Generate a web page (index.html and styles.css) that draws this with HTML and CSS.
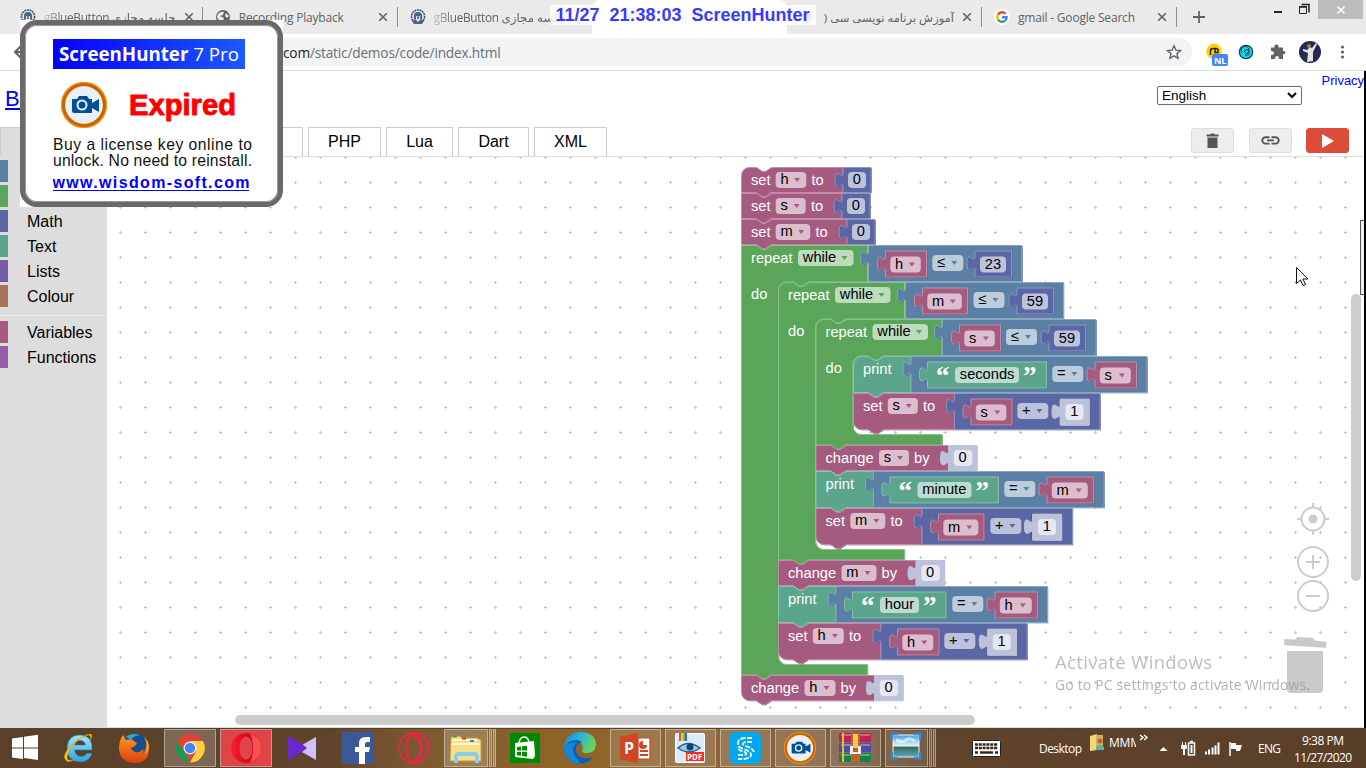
FILE: index.html
```html
<!DOCTYPE html>
<html lang="en">
<head>
<meta charset="utf-8">
<title>Blockly Demo: Code</title>
<link rel="stylesheet" href="styles.css">
</head>
<body>
<svg class="defs" width="0" height="0">
  <symbol id="crest" viewBox="0 0 16 16"><circle cx="8" cy="7.5" r="6.6" fill="#dde2ea" stroke="#3b4d6d" stroke-width="1.5" stroke-dasharray="2 .7"/><path d="M4 7a4 4 0 0 1 8 0v3H4zM2 12l3-2 3 3 3-3 3 2-2 3H4z" fill="#52627f"/><path d="M6 7h1.3v3H6zm2.8 0h1.3v3H8.800z" fill="#dde2ea"/></symbol>
  <symbol id="close" viewBox="0 0 10 10"><path d="M1.200 1.200l7.600 7.600M8.800 1.200l-7.600 7.600" stroke="#5f6368" stroke-width="1.600"/></symbol>
  <symbol id="camera" viewBox="0 0 46 46"><circle cx="23" cy="23" r="21" fill="#e9f0f9" stroke="#f7941d" stroke-width="4.500"/><circle cx="23" cy="23" r="20.500" fill="none" stroke="#c86400" stroke-width="2.800"/><path d="M11 17h5l2-3h8l2 3h3v4l7-4v13l-7-4v5H13q-2 0-2-2z" fill="#034f96"/><circle cx="21" cy="23" r="4.500" fill="#034f96" stroke="#e9f0f9" stroke-width="2"/></symbol>
</svg>

<div class="screen">
  <div class="tabstrip">
    <div class="tab"><svg class="fav"><use href="#crest"/></svg><span class="t fade" dir="ltr">gBlueButton جلسه مجازی</span><svg class="x"><use href="#close"/></svg></div>
    <div class="tab"><svg class="fav" viewBox="0 0 16 16"><circle cx="8" cy="8" r="7" fill="#5f6368"/><path d="M3 5q3-3 6-2l-1 3-3 1 4 2-1 3Q3 12 2 8zM11 4l3 3-2 2-2-2z" fill="#e9e9e9"/></svg><span class="t">Recording Playback</span><svg class="x"><use href="#close"/></svg></div>
    <div class="tab"><svg class="fav"><use href="#crest"/></svg><span class="t fade" dir="ltr">gBlueButton جلسه مجازی</span></div>
    <div class="tab active"><svg class="fav pale" viewBox="0 0 16 16"><path d="M1 2h7v4h7v8H5v-4H1z" fill="#b9cfe4"/></svg><span class="t pale">Blockly Demo: Code</span></div>
    <div class="tab fa"><svg class="fav" viewBox="0 0 16 16"><circle cx="8" cy="7" r="5" fill="#8fa4b8"/><path d="M5 11h6l-3 4z" fill="#8fa4b8"/></svg><span class="t" dir="rtl">آموزش برنامه نویسی سی (</span><svg class="x"><use href="#close"/></svg></div>
    <div class="tab"><svg class="fav" viewBox="0 0 16 16"><circle cx="8" cy="8" r="8" fill="#fff"/><g fill="none" stroke-width="2.400"><path d="M4 5.500A4.700 4.700 0 0 1 11.500 4.800" stroke="#ea4335"/><path d="M4 5.500a4.700 4.700 0 0 0 0 5" stroke="#fbbc05"/><path d="M4 10.500a4.700 4.700 0 0 0 7.300 1" stroke="#34a853"/><path d="M11.300 11.500A4.700 4.700 0 0 0 12.600 8.200H8" stroke="#4285f4"/></g></svg><span class="t">gmail - Google Search</span><svg class="x"><use href="#close"/></svg></div>
    <svg class="plus" viewBox="0 0 12 12"><path d="M6 0v12M0 6h12" stroke="#5f6368" stroke-width="1.800"/></svg>
    <div class="winctl">
      <svg width="52" height="20" viewBox="0 0 52 20"><path d="M8 12h8" stroke="#222" stroke-width="2"/><path d="M33.500 6.500h7v7h-7z" fill="none" stroke="#222"/><path d="M33 7h8M35.500 4.500h7.500v8" stroke="#222" stroke-width="1.500" fill="none"/></svg>
      <span class="winclose"><svg width="10" height="10" viewBox="0 0 10 10"><path d="M1.500 1.500l7 7M8.500 1.500l-7 7" stroke="#fff" stroke-width="1.700"/></svg></span>
    </div>
  </div>

  <div class="toolbar">
    <svg class="back" width="16" height="16" viewBox="0 0 16 16"><path d="M8 1L1 8l7 7M1 8h14" stroke="#5f6368" stroke-width="2" fill="none"/></svg>
    <div class="omnibox"><span class="url"><b>com</b>/static/demos/code/index.html</span>
      <svg width="16" height="16" viewBox="0 0 16 16"><path d="M8 1.800l1.900 4.400 4.700.4-3.600 3.100 1.100 4.700L8 11.900l-4.100 2.500L5 9.700 1.400 6.600l4.700-.4z" fill="none" stroke="#5f6368" stroke-width="1.400"/></svg>
    </div>
    <svg class="ext" width="160" height="28" viewBox="1200 38 160 28">
      <circle cx="1214" cy="51.500" r="7.700" fill="#fdd100"/><path d="M1210.500 55v-4q0-2.500 2.500-2.500h3q2 0 2 2v2h-3v-4" fill="none" stroke="#222" stroke-width="1.500"/><rect x="1212" y="54" width="16" height="12" rx="2" fill="#4285f4"/><text x="1214" y="63.500" class="nl">NL</text>
      <circle cx="1246" cy="52" r="6.700" fill="#16d5ee" stroke="#0d4553" stroke-width="1.200"/><path d="M1242 53a4 4 0 1 1 7-2l-2 3-3-3q3-3 5 0 2 5-4 4" fill="none" stroke="#0d4553"/>
      <path d="M1271 47.500h3.500q-.5-3 2-3t2 3h4.500v3.500q2.500-.5 2.500 1.500t-2.500 1.500v5h-4q0-3-2-3t-2 3h-4v-4q3 0 3-2t-3-2z" fill="#5f6368"/>
      <circle cx="1310" cy="52" r="11" fill="#222b50"/><path d="M1303 49l4 1 3-3 2 1 4-5 1 1-4 8v9l-6 1 1-9-5-2z" fill="#e9e4e1"/><circle cx="1309" cy="46" r="2" fill="#a87963"/>
      <circle cx="1342.500" cy="47" r="1.600" fill="#5f6368"/><circle cx="1342.500" cy="52" r="1.600" fill="#5f6368"/><circle cx="1342.500" cy="57" r="1.600" fill="#5f6368"/>
    </svg>
  </div>

  <div class="page">
    <header class="head">
      <a class="brand">Blockly</a>
      <span class="select">English<svg width="10" height="7" viewBox="0 0 10 7"><path d="M1 1l4 4 4-4" fill="none" stroke="#111" stroke-width="2.200"/></svg></span>
      <a class="privacy">Privacy</a>
    </header>
    <nav class="codetabs">
      <span class="ct on" style="width:80px"></span><span class="ct" style="width:125px"></span><span class="ct" style="width:88px"></span><span class="ct" style="width:73px">PHP</span><span class="ct" style="width:67px">Lua</span><span class="ct" style="width:71px">Dart</span><span class="ct" style="width:73px">XML</span>
      <div class="buttons">
        <span class="btn"><svg width="13" height="16" viewBox="0 0 13 16"><path d="M.5 1.500h3.500l1-1h3l1 1h3.500v2H.5zM1.500 4.500h10V15h-10z" fill="#555"/></svg></span>
        <span class="btn"><svg width="19" height="9" viewBox="0 0 19 9"><path d="M8.500 1.200H4.500a3.200 3.200 0 0 0 0 6.400h4M10.500 1.200h4a3.200 3.200 0 0 1 0 6.400h-4M6 4.400h7" stroke="#555" stroke-width="1.900" fill="none"/></svg></span>
        <span class="btn run"><svg width="12" height="14" viewBox="0 0 12 14"><path d="M0 0l12 7-12 7z" fill="#fff"/></svg></span>
      </div>
    </nav>
    <div class="editor">
      <aside class="toolbox">
        <div class="cat"><i style="background:#5b80a5"></i></div>
        <div class="cat"><i style="background:#5ba55b"></i></div>
        <div class="cat"><i style="background:#5b67a5"></i>Math</div>
        <div class="cat"><i style="background:#5ba58c"></i>Text</div>
        <div class="cat"><i style="background:#745ba5"></i>Lists</div>
        <div class="cat"><i style="background:#a5745b"></i>Colour</div>
        <hr>
        <div class="cat"><i style="background:#a55b80"></i>Variables</div>
        <div class="cat"><i style="background:#995ba5"></i>Functions</div>
      </aside>
      <svg class="workspace" width="1257" height="570" viewBox="107 157 1257 570">
        <defs><pattern id="grid" x="108" y="195" width="25" height="25" patternUnits="userSpaceOnUse"><path d="M11 12.500h3M12.500 11v3" stroke="#c6c6c6" stroke-width="1"/></pattern></defs>
        <rect x="107" y="157" width="1257" height="570" fill="url(#grid)"/>
        <g id="blocks"></g>
        <g fill="none" stroke="#ccc" stroke-width="2">
          <circle cx="1313" cy="519" r="11.500"/><circle cx="1313" cy="519" r="4.500" fill="#ccc" stroke="none"/><path d="M1313 503v4m0 24v4M1297 519h4m24 0h4"/>
          <circle cx="1313" cy="562" r="15"/><path d="M1306 562h14m-7-7v14"/>
          <circle cx="1313" cy="596" r="15"/><path d="M1306 596h14"/>
        </g>
        <path d="M1284.300 639l11 .6 2-2.600 15 .8 3 3 11.200 1-.5 6-42-2.500z" fill="#c9c9c9"/><path d="M1287 651h36v38q0 4-4 4h-28q-4 0-4-4z" fill="#c9c9c9"/>
        <rect x="235" y="715" width="740" height="10" rx="5" fill="#ccc"/>
        <rect x="1351" y="294" width="10" height="287" rx="5" fill="#ccc"/>
        <rect x="1360.500" y="220.500" width="8" height="74" fill="#e8f1fb" stroke="#555"/>
        <path d="M1296.500 267.500v16l4-3.500 2.500 5.500 2.500-1-2.500-5.500h5z" fill="#fff" stroke="#111"/>
        <text x="1055" y="669" class="wm1" textLength="157">Activate Windows</text>
        <text x="1055" y="690" class="wm2" textLength="255">Go to PC settings to activate Windows.</text>
      </svg>
    </div>
  </div>

  <footer class="taskbar">
    <svg class="apps" width="940" height="40" viewBox="0 728 940 40">
      <defs>
        <linearGradient id="ie" x2="0" y2="1"><stop stop-color="#a5e6ff"/><stop offset="1" stop-color="#2ca3df"/></linearGradient>
        <linearGradient id="op" x2="1"><stop stop-color="#ff1b2d"/><stop offset="1" stop-color="#a70014"/></linearGradient>
        <linearGradient id="ed" x2="1" y2=".4"><stop stop-color="#1b7fd4"/><stop offset=".5" stop-color="#2bb3dc"/><stop offset="1" stop-color="#6ad35b"/></linearGradient>
        <linearGradient id="ff" x2="0" y2="1"><stop stop-color="#ff9a1a"/><stop offset="1" stop-color="#dc3f12"/></linearGradient>
        <linearGradient id="sky" x2="0" y2="1"><stop stop-color="#3f9ee8"/><stop offset=".5" stop-color="#e5f4fa"/><stop offset=".55" stop-color="#386b55"/><stop offset="1" stop-color="#5fa5c7"/></linearGradient>
      </defs>
      <g fill="#fff" fill-opacity=".2" stroke="#fff" stroke-opacity=".45">
        <rect x="164.500" y="729.500" width="51" height="37"/><rect x="220.500" y="729.500" width="51" height="37" fill="#ff4650" fill-opacity=".8"/>
        <rect x="444.500" y="729.500" width="43" height="37"/><path d="M489.500 729.500h2v37h-2zM493.500 729.500h2v37h-2z"/>
        <g fill-opacity=".13"><rect x="610.500" y="729.500" width="50" height="37"/><rect x="665.500" y="729.500" width="50" height="37"/><rect x="720.500" y="729.500" width="50" height="37"/><rect x="775.500" y="729.500" width="50" height="37"/><rect x="830.500" y="729.500" width="50" height="37"/>
        <rect x="885.500" y="729.500" width="42" height="37"/><path d="M929.500 729.500h2v37h-2zM933.500 729.500h2v37h-2z"/></g>
      </g>
      <path d="M12 738.500l11-1.600v10.600H12zm12-1.700l14-2v12.700H24zM12 748.500h11v10.600l-11-1.600zm12 0h14V760l-14-2z" fill="#fff"/>
      <path fill-rule="evenodd" d="M92 750H74.500q1 6.500 6.500 6.500 4 0 5.500-3H92q-3 8.500-12 8.500-13-1-13-14 1-13 13-13 13 1 12 15zm-17.500-5h11q-1-4.500-5.500-4.500t-5.500 4.500z" fill="url(#ie)" stroke="#1a83bd" stroke-width=".5"/><path d="M66 760q-5-4 6-15T91 734q2 2-1 6 2-5-2-5-9 2-17 13-6 9-3 12 3 1 7-1-8 5-9 1z" fill="#ffc915" stroke="#ce940b" stroke-width=".5"/>
      <circle cx="135" cy="747" r="13.500" fill="#174f8e"/><path d="M126 737q5-5 14-2-8 1-8 5z" fill="#3b9ed2"/><path d="M119 749q0-9 4-14l3 5q5-2 8 1l3 2-2 3-4 2q2 5 8 4 3-1 4-3 2 3-2 5 4-1 5-8 1-6-3-10 6 4 6 13 0 14-15 14-14-1-15-14z" fill="url(#ff)"/><path d="M145 739q5 7 0 15 5-4 3-12z" fill="#ffc42a"/>
      <circle cx="190" cy="748" r="14.500" fill="#db4437"/><path d="M177 741.500l7 10 6 10.500A14.500 14.500 0 0 1 177 741.500z" fill="#0f9d58"/><path d="M190 741h13a14.500 14.500 0 0 1-13 21.500l6-11z" fill="#ffcd40"/><circle cx="190" cy="748" r="6.500" fill="#f1f1f1"/><circle cx="190" cy="748" r="5.200" fill="#4285f4"/>
      <path fill-rule="evenodd" d="M246 733a15 15 0 1 0 .1 0zm0 3.500c4 0 6.500 5 6.500 11.500s-2.500 11.500-6.500 11.500-6.500-5-6.500-11.500 2.500-11.500 6.500-11.500z" fill="url(#op)"/>
      <path d="M250 734q11 3 11 14t-11 14q3-5 3-14t-3-14z" fill="#ff504f"/>
      <path d="M288 737v22l1 1 14-9v-6l-14-9z" fill="#6928cf"/><path d="M316 737v23l-14-8v-7z" fill="#d1c0fb"/><path d="M302 744l5 4-5 4z" fill="#6928cf"/>
      <rect x="342" y="732" width="32" height="32" rx="1" fill="#3b5998"/><path d="M359 764v-12h-4v-5h4v-4q0-6 7-6h4v5h-3q-2 0-2 2v3h5l-1 5h-4v12z" fill="#fff"/>
      <g fill="none" stroke="#fa1e4e" stroke-width="1.500"><circle cx="414" cy="748" r="15"/><ellipse cx="414" cy="748" rx="8" ry="14"/><path d="M409 734q13 5 12 15-1 8-7 12"/></g>
      <path d="M451 737l8-1 3 2h15l4 2v21h-31z" fill="#f4df8c" stroke="#c89c42"/><path d="M453 740h24M452 744h27" stroke="#fff8c9" stroke-width="2"/><path d="M453 736.500h4" stroke="#2caa37" stroke-width="2"/><path d="M462 738.500h4" stroke="#d8411d" stroke-width="2"/><path d="M470 741h4" stroke="#238bdb" stroke-width="2"/><path d="M456 763v-6q0-3 3-3h15q3 0 3 3v6" fill="none" stroke="#8accea" stroke-width="4"/>
      <rect x="510" y="733" width="30" height="30" fill="#008a00"/><path d="M515 743l19-2 1 15-2 3-18-2z" fill="#fff"/><path d="M519 743q1-6 5-6t5 5" fill="none" stroke="#fff" stroke-width="1.500"/><path d="M517 747l4-.5v4h-4zm5-.7l5-.5v4.700h-5zm-5 5.500h4v4l-4-.5zm5 0h5v5l-5-.8z" fill="#008a00"/>
      <path d="M564 748q1-16 17-16 15 1 15 13-1 8-9 8-5 0-5-2 3-7-5-9-8-1-13 6z" fill="url(#ed)"/><path d="M564 748q4-8 12-8 4 0 6 3-7 0-6 8 2 10 17 6-5 7-14 7-14-2-15-16z" fill="#0d61b4"/><path d="M564 748q5-7 13-5-7 4-2 13 3 5 6 8-16-1-17-16z" fill="#1686d8"/>
      <path d="M620 737l18-4v30l-18-4z" fill="#d04526"/><path d="M638 738h12v21h-12z" fill="#fff" stroke="#d04526" stroke-width="1.200"/><path d="M640 751h8m-8 4h8" stroke="#d04526" stroke-width="1.800"/><circle cx="643" cy="745" r="4" fill="#d04526"/><path d="M643 745v-4.500a4.500 4.500 0 0 1 4.500 4.500z" fill="#fff"/><text x="624" y="754" class="ppt">P</text>
      <rect x="675.500" y="733.500" width="29" height="29" rx="1" fill="#dcebf9" stroke="#fff"/><path d="M679 733h2v8h-2z" fill="#f44"/><path d="M681 733h2v8h-2z" fill="#fd3"/><path d="M683 733h2v8h-2z" fill="#4c6"/><path d="M685 733h2v8h-2z" fill="#55e"/><path d="M678 748q10-9 22 0-11 8-22 0z" fill="#9dc9ec" stroke="#1d5c8b" stroke-width="1.500"/><circle cx="690" cy="747" r="3.500" fill="#12466f"/><rect x="686" y="752" width="18" height="9" fill="#ee3124"/><text x="687" y="759.500" class="pdf">PDF</text>
      <rect x="729" y="732" width="32" height="32" rx="6" fill="#00a9ee"/><path d="M752 738h-8q-6 1-6 5t5 6q8 2 8 6 0 3-7 4h-6M752 742h-7q-4 2 0 4 7 1 9 6M738 755h6q4-1 1-3-7-1-7-5" fill="none" stroke="#fff" stroke-width="1.800" stroke-dasharray="5 1.500"/>
      <use href="#camera" x="784" y="732" width="32" height="32"/>
      <rect x="839" y="733" width="32" height="9" rx="1" fill="#bd2350"/><rect x="839" y="743" width="32" height="9" rx="1" fill="#504ca5"/><rect x="839" y="753" width="32" height="9" rx="1" fill="#18814a"/><path d="M841 735h29M841 745h29M841 755h29" stroke="#fff" stroke-opacity=".3" stroke-width="2"/><path d="M843 733v29" stroke="#e9b93b" stroke-width="2"/><path d="M851 733h9v29h-9z" fill="#b9652a"/><path d="M853 734h5v14h-5z" fill="#ffc84b"/><path d="M850 746h3v6h5v-6h3v8h-11z" fill="#eee"/>
      <rect x="893" y="735" width="26" height="22" fill="url(#sky)" stroke="#e8f3fa"/><path d="M896 740q7 3 10 0t9 1" stroke="#fff" stroke-width="3" opacity=".6" fill="none"/><path d="M892 740v-6h6M914 734h6v6M920 752v6h-6M898 758h-6v-6" stroke="#3d88c7" stroke-width="2.500" fill="none"/>
    </svg>
    <svg class="tray" width="426" height="40" viewBox="940 728 426 40">
      <rect x="972.500" y="740.500" width="28" height="16" rx="1" fill="#fff" stroke="#222"/><path d="M975 744.500h23M975 748h23M975 752.500h3m17 0h3" stroke="#332517" stroke-width="2.400" stroke-dasharray="3 .8"/><path d="M980 752.500h13" stroke="#332517" stroke-width="2.400"/>
      <text x="1039" y="752.500" class="tk" textLength="43">Desktop</text>
      <path d="M1090 736l7-2v16l-7 1z" fill="#f3d77b"/><path d="M1096 735h7v15h-7z" fill="#d9ae4c"/><circle cx="1100" cy="741" r="2.500" fill="#a66c43"/><path d="M1096 750v-3q4-5 8 0v3z" fill="#54b6a3"/>
      <svg x="1108" y="730" width="28" height="26" viewBox="1108 730 28 26"><text x="1109" y="747" class="tk" textLength="32">MMM</text></svg>
      <path d="M1140 735l3 2.500-3 2.500m4-5l3 2.500-3 2.500" fill="none" stroke="#fff" stroke-width="1.400"/>
      <path d="M1159.500 751l4-4 4 4z" fill="#fff"/>
      <path d="M1182.500 742v3m3-3v3" stroke="#fff"/><path d="M1181 745h6v4h-2v6h-2v-6h-2z" fill="#fff"/><rect x="1188.500" y="743" width="6" height="12" fill="none" stroke="#fff" stroke-width="1.500"/><path d="M1190 741.500h3" stroke="#fff" stroke-width="1.500"/><path d="M1190.500 745h2v8h-2z" fill="#fff"/>
      <path d="M1206 754.500v-3m3 3v-5m3.500 5v-7m3 7v-9m3 9v-12" stroke="#fff" stroke-width="2"/>
      <path d="M1230 742v14" stroke="#fff" stroke-width="1.500"/><path d="M1231 743h5v2h6l-2 6h-4v-2h-5z" fill="#fff"/>
      <text x="1258" y="753" class="tk" textLength="23">ENG</text>
      <text x="1302" y="745" class="tk" textLength="42">9:38 PM</text><text x="1294" y="762" class="tk" textLength="58">11/27/2020</text>
    </svg>
  </footer>

  <div class="stamp"><svg width="266" height="20"><text x="5.500" y="16" textLength="254" lengthAdjust="spacingAndGlyphs" xml:space="preserve">11/27  21:38:03  ScreenHunter</text></svg></div>
  <div class="popup">
    <div class="card">
      <div class="banner"><svg width="192" height="30"><text x="6" y="22" textLength="180" lengthAdjust="spacingAndGlyphs"><tspan font-weight="700">ScreenHunter</tspan> 7 Pro</text></svg></div>
      <div class="exp"><svg width="46" height="46"><use href="#camera"/></svg><svg width="120" height="46"><text x="6" y="33" textLength="107" lengthAdjust="spacingAndGlyphs" class="expt">Expired</text></svg></div>
      <svg width="210" height="60"><text x="0" y="14" textLength="199" class="pt">Buy a license key online to</text><text x="0" y="30" textLength="199" class="pt">unlock. No need to reinstall.</text><text x="-.5" y="52" textLength="197" class="pl">www.wisdom-soft.com</text><path d="M-1 54.500h197" stroke="#00f"/></svg>
    </div>
  </div>
</div>
<script src="blocks.js"></script>
</body>
</html>
```

FILE: styles.css
```css
* { box-sizing: border-box; }
body { margin: 0; background: #fff; font-family: "Liberation Sans", sans-serif; }
svg { display: block; flex: none; }
.defs { position: absolute; }
.screen { position: relative; width: 1366px; height: 768px; overflow: hidden; display: flex; flex-direction: column; }

.tabstrip { height: 34px; flex: none; background: #eaeaea; display: flex; padding-left: 8px; align-items: center; font: 12px "Open Sans", "DejaVu Sans", sans-serif; color: #5f6368; }
.tab { width: 194.8px; flex: none; height: 34px; padding: 0 10px 0 12px; display: flex; align-items: center; gap: 8px; position: relative; }
.tab::after { content: ""; position: absolute; right: 0; top: 7px; width: 1px; height: 20px; background: #8a8d91; }
.tab:nth-child(3)::after, .tab.active::after { display: none; }
.tab.active { background: #fff; border-radius: 8px 8px 0 0; }
.fav { width: 16px; height: 16px; }
.t { flex: 1; white-space: nowrap; letter-spacing: -.2px; }
.t.fade { font-size: 11.800px; letter-spacing: -.3px; -webkit-mask-image: linear-gradient(90deg, #0004, #000 20px); }
.pale { opacity: .35; }
.fa .t { font-size: 11.500px; letter-spacing: 0; }
.x { width: 10px; height: 10px; }
.plus { width: 12px; height: 12px; margin-left: 16px; }
.winctl { margin-left: auto; display: flex; align-items: flex-start; height: 34px; padding-right: 3px; }
.winclose { width: 45px; height: 19px; background: #bcbcbc; display: flex; align-items: center; justify-content: center; }

.toolbar { height: 37px; flex: none; border-bottom: 1px solid #d9dbde; display: flex; align-items: center; padding-left: 14px; }
.omnibox { width: 1082px; height: 28px; margin-left: 80px; background: #f1f3f4; border-radius: 14px; display: flex; align-items: center; justify-content: space-between; padding: 0 10px 0 173px; }
.url { font: 13.700px "Open Sans", sans-serif; color: #6b6f73; letter-spacing: -.2px; white-space: nowrap; }
.url b { font-weight: 400; color: #222; }
.ext { margin-left: 8px; }
.nl { font: 700 9px "Open Sans", sans-serif; fill: #fff; }

.page { height: 657px; flex: none; width: 1364px; display: flex; flex-direction: column; border-bottom: 1px solid #ddd; box-shadow: 2px 0 0 #000; }
.head { height: 56px; flex: none; display: flex; align-items: flex-start; }
.brand { margin: 15px 0 0 5px; color: #00f; text-decoration: underline; font-size: 22px; }
.select { margin: 15px 0 0 auto; width: 145px; height: 19px; border: 1px solid #6b6b6b; border-radius: 2px; padding: 0 4px; display: flex; align-items: center; justify-content: space-between; font-size: 13.5px; color: #000; }
.privacy { margin: 2px 0 0 19.5px; width: 42.5px; font-size: 13px; color: #00f; white-space: nowrap; }
.codetabs { height: 30px; flex: none; display: flex; gap: 5px; border-bottom: 1px solid #ddd; }
.ct { border: 1px solid #ccc; border-bottom: 0; height: 29px; flex: none; display: flex; align-items: center; justify-content: center; font-size: 16px; }
.ct.on { background: #ddd; }
.buttons { margin-left: auto; display: flex; gap: 15px; padding: 1px 15px 0 0; }
.btn { width: 43px; height: 25px; border: 1px solid #ddd; border-radius: 3px; background: #ededed; display: flex; align-items: center; justify-content: center; }
.run { background: #dd4b39; border-color: #dd4b39; margin-left: -1px; }

.editor { flex: 1; display: flex; min-height: 0; }
.toolbox { width: 107px; background: #ddd; padding-top: 3px; flex: none; }
.cat { height: 22px; margin-bottom: 3px; display: flex; align-items: center; gap: 19px; font-size: 16px; line-height: 20px; padding-top: 2px; color: #000; }
.cat i { width: 8px; height: 22px; margin-top: -2px; }
.toolbox hr { margin: 8px 0 5px; border: 0; height: 1px; background: #eee; }

.bt { font-size: 14.67px; fill: #fff; }
.ft { font-size: 14.67px; fill: #000; }
.q { font: 700 27px "Liberation Serif", serif; fill: #fff; }
.wm1 { font: 18.500px "Open Sans", sans-serif; fill: #999; opacity: .65; }
.wm2 { font: 14px "Open Sans", sans-serif; fill: #999; opacity: .75; }

.taskbar { height: 40px; flex: none; display: flex; background: linear-gradient(90deg, #5a3f2a 0, #5f442b 330px, #7c5830 410px, #85602f 500px, #8f6425 570px, #8f6637 680px, #80603f 830px, #60432b 930px, #5a3f28 100%); box-shadow: inset 0 1px 0 #55402a; }
.tk { font: 12px "Open Sans", sans-serif; fill: #fff; }
.ppt { font: 700 16px "Open Sans", sans-serif; fill: #fff; }
.pdf { font: 700 8px "Open Sans", sans-serif; fill: #fff; }

.stamp { position: absolute; left: 550px; top: 5px; width: 266px; height: 20px; background: #fffc; font: 700 18px "Liberation Sans", sans-serif; }
.stamp text { fill: #3a3aff; }
.popup { position: absolute; left: 20px; top: 20px; width: 263px; height: 187px; background: #fff; }
.card { width: 263px; height: 187px; border: 5px solid #696969; border-radius: 17px; padding: 14px 0 0 28px; box-shadow: inset 0 0 0 1px #999; }
.banner { width: 192px; height: 30px; background: linear-gradient(90deg, #0500ff, #1c59ff); font: 19px "Open Sans", sans-serif; }
.banner text { fill: #fff; }
.exp { display: flex; gap: 16px; padding: 13px 0 0 8px; height: 67px; }
.expt { font: 700 29px "Liberation Sans", sans-serif; fill: #f00; stroke: #f00; stroke-width: .9px; stroke-linejoin: round; }
.pt { font-size: 15.700px; fill: #111; }
.pl { font-weight: 700; font-size: 16px; fill: #00f; }
```

FILE: blocks.js
```js
const C = { v: '#a55b80', l: '#5ba55b', m: '#5b67a5', g: '#5b80a5', t: '#5ba58c', s: '#bdc2db' };
const out = [];
const shade = (hex, k) => '#' + [1, 3, 5].map(i => {
  const c = parseInt(hex.slice(i, i + 2), 16);
  return Math.round(k > 0 ? c + (255 - c) * k : c * (1 + k)).toString(16).padStart(2, '0');
}).join('');

// Body plus a dark lower-right edge and a light upper-left edge.
function shape(d, c) {
  const hi = c === C.s ? c : shade(c, 0.3), lo = c === C.s ? c : shade(c, -0.25);
  out.push(`<path d="${d}" transform="translate(.7 .7)" fill="${lo}"/><path d="${d}" fill="${c}" stroke="${hi}" stroke-width="1"/>`);
}
const text = (x, y, s, cls = 'bt') => out.push(`<text class="${cls}" x="${x}" y="${y}">${s}</text>`);

function field(x, y, w, s, c, arrow) {
  y -= 0.5;
  out.push(`<rect x="${x}" y="${y}" width="${w}" height="16" rx="4" fill="#fff" fill-opacity=".6"/>`);
  out.push(`<text class="ft" x="${x + 4.800}" y="${Math.floor(y + 12.900)}">${s}</text>`);
  if (arrow) out.push(`<path d="M${x + w - 12} ${y + 6}h6l-3 4z" fill="${c}"/>`);
}

// Statement block; foot: 'join' continues the stack, 'end' rounds its corner.
function stmt(x, y, w, h, c, foot, head) {
  const top = head ? `M${x} ${y + 8}a8 8 0 0 1 8-8` : `M${x} ${y}`;
  const base = foot === 'end' ? `H${x + 8}a8 8 0 0 1-8-8z` : `H${x}z`;
  shape(`${top}H${x + 15}l6 4h3l6-4H${x + w}v${h}H${x + 29.500}l-6 4h-3l-6-4${base}`, c);
}
function value(x, y, w, h, c) {
  shape(`M${x} ${y}h${w - 0.500}v${h}H${x}V${y + 20}c0-10-8 8-8-7.500s8 2.500 8-7.500z`, c);
}
function loop(x, y, w, inner, arm, bottom, head) {
  const top = head ? `M${x} ${y + 8}a8 8 0 0 1 8-8` : `M${x} ${y}`, ix = x + 37;
  shape(`${top}H${x + 15}l6 4h3l6-4H${x + w}V${inner}H${ix + 30}l-6 4h-3l-6-4H${ix + 8}a8 8 0 0 0-8 8V${arm - 8}a8 8 0 0 0 8 8H${x + w}V${bottom}H${x + 29.500}l-6 4h-3l-6-4H${x}z`, C.l);
  text(x + 9.500, y + 17.400, 'repeat');
  field(x + 56.500, y + 5, 55.500, 'while', C.l, true);
  text(x + 9.500, y + 53.400, 'do');
}
function num(x, y, w, s, h = 25) { value(x, y, w, h, C.s); field(x + 5.300, y + 5, w - 10.500, s, C.s); }
function variable(x, y, w, s) { value(x, y, w, 26, C.v); field(x + 4.800, y + 6, w - 11, s, C.v, true); }

function setNum(y, vx, fw, s, head) {
  stmt(741.5, y, vx - 741.5, 25, C.v, 'join', head);
  text(751, y + 17.400, 'set'); field(775.700, y + 5, fw, s, C.v, true); text(776 + fw + 5, y + 17.400, 'to');
  value(vx, y, 28.500, 25, C.m); field(vx + 5, y + 5, 18, '0', C.m);
}
function change(x, y, vx, fw, s, foot) {
  stmt(x, y, vx - x, 25, C.v, foot);
  text(x + 9.500, y + 17.400, 'change'); field(x + 63, y + 5, fw, s, C.v, true); text(x + 63 + fw + 5, y + 17.400, 'by');
  num(vx, y, 29, '0');
}
function compare(x, y, w, s, vw, ox, nx, n) {
  value(x, y, w, 36, C.g); variable(x + 17, y + 5.500, vw, s);
  field(ox, y + 10, 31, '≤', C.g, true); value(nx, y + 5.500, 37, 26, C.m); field(nx + 5, y + 11.500, 26, n, C.m);
}
function print(x, y, vx, w, tw, s, fw, ox, nx, vw, v, head) {
  stmt(x, y, vx - x, 36, C.t, 'join', head); text(x + 9.500, y + 17.400, 'print');
  value(vx, y, w, 36, C.g); value(vx + 16.500, y + 5.500, tw, 26, C.t);
  text(vx + 25, y + 28.500, '“', 'q'); field(vx + 44, y + 11, fw, s, C.t); text(vx + 48 + fw, y + 28.500, '”', 'q');
  field(ox, y + 10, 31, '=', C.g, true); variable(nx, y + 5.500, vw, v);
}
function setSum(x, y, vx, w, s, fw, vw, ox, nx) {
  stmt(x, y, vx - x, 36, C.v, 'end'); text(x + 9.500, y + 17.400, 'set');
  field(x + 34.300, y + 5, fw, s, C.v, true); text(x + 39.500 + fw, y + 17.400, 'to');
  value(vx, y, w, 36, C.m); variable(vx + 16.500, y + 5.500, vw, s);
  field(ox, y + 10, 31, '+', C.m, true);
  // The shadow operand is pale, so its socket supplies the outline.
  out.push(`<path d="M${nx - 0.500} ${y + 31.500}V${y + 5}H${nx + 29}" fill="none" stroke="${shade(C.m, -0.3)}"/>`);
  value(nx, y + 5.500, 29.500, 26, C.s);
  field(nx + 5.500, y + 11, 18, '1', C.s);
}

setNum(167.5, 843, 30.5, 'h', true);
setNum(193.5, 842, 30, 's');
setNum(219.5, 847, 34.5, 'm');
loop(741.5, 245.5, 126, 282, 664.5, 675);
compare(868.5, 245.5, 154, 'h', 41.5, 932.3, 975, '23');
loop(778.5, 282.5, 126, 319, 549.5, 560, true);
compare(905.5, 282.5, 158.5, 'm', 45.5, 973.5, 1017, '59');
loop(816, 319.5, 126, 356, 434.5, 445, true);
compare(942.5, 319.5, 154, 's', 41.5, 1006, 1049, '59');
print(853.5, 356.5, 911, 236.5, 119.5, 'seconds', 64, 1052.3, 1095, 42, 's', true);
setSum(853.5, 393.5, 954.5, 146, 's', 30, 41.5, 1017.3, 1060);
change(816, 445.5, 948.5, 30, 's', 'join');
print(816, 471.5, 873.5, 231, 109, 'minute', 54, 1004.3, 1047, 47, 'm');
setSum(816, 508.5, 922, 151, 'm', 35, 46, 990.3, 1032.5);
change(778.5, 560.5, 916, 35, 'm', 'join');
print(778.5, 586.5, 836, 212, 94, 'hour', 39, 952.3, 995, 43, 'h');
setSum(778.5, 623.5, 881, 146.5, 'h', 31, 42, 944.3, 987.3);
change(741.5, 675.5, 874.5, 31, 'h', 'end');

document.getElementById('blocks').innerHTML = out.join('');
```
